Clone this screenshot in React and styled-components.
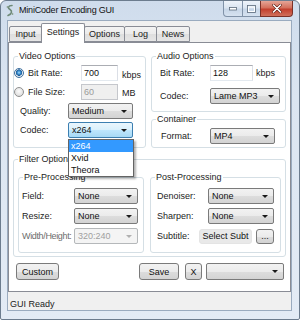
import React from 'react';
import styled, { createGlobalStyle } from 'styled-components';

const GlobalStyle = createGlobalStyle`
* { box-sizing: border-box; }
body {
  margin: 0;
  background: #fff;
  font-family: "Liberation Sans", Arial, sans-serif;
  font-size: 9px;
  color: #1c1c1c;
}
`;

const Window = styled.div`
width: 300px;
height: 320px;
border: 1px solid #6c7c8e;
border-radius: 6px 6px 2px 2px;
background: linear-gradient(180deg, #cfdcec 0%, #dbe5f1 30%, #e3ebf5 100%);
padding: 0 7px 8px 6px;
display: flex;
flex-direction: column;
`;

const TitleBar = styled.div`
height: 20px;
display: flex;
align-items: flex-start;
`;

const AppIcon = styled.svg`
width: 10px;
height: 13px;
margin: 3px 4px 0 -2px;
flex: none;
`;

const Title = styled.span`
font-size: 9px;
letter-spacing: -0.2px;
line-height: 18px;
color: #111;
`;

const Captions = styled.div`
margin-left: auto;
margin-right: -1px;
display: flex;
`;

const CaptionBtn = styled.div`
width: ${p => p.$w}px;
height: 16px;
display: flex;
align-items: center;
justify-content: center;
border: 1px solid ${p => (p.$close ? '#7b3128' : '#8092a8')};
border-top: none;
margin-left: -1px;
border-radius: ${p => p.$radius};
background: ${p => p.$close
    ? 'linear-gradient(180deg, #e5a597 0%, #d4705c 45%, #c33f2d 55%, #d0705c 100%)'
    : 'linear-gradient(180deg, #eef3fa 0%, #dbe5f1 45%, #c7d6e8 55%, #d6e2f0 100%)'};
`;

const Client = styled.div`
flex: 1;
display: flex;
flex-direction: column;
background: #f0f0f0;
border: 1px solid #9aabbf;
`;

const TabStrip = styled.div`
height: 21px;
display: flex;
align-items: flex-end;
padding-left: 1px;
`;

const Tab = styled.div`
width: ${p => p.$w}px;
height: ${p => (p.$active ? 20 : 16)}px;
margin-right: -1px;
margin-bottom: ${p => (p.$active ? -1 : 0)}px;
display: flex;
align-items: center;
justify-content: center;
padding-bottom: ${p => (p.$active ? 3 : 0)}px;
border: 1px solid #898c95;
border-bottom: ${p => (p.$active ? 'none' : '1px solid #898c95')};
border-radius: 2px 2px 0 0;
background: ${p => (p.$active
    ? '#fff'
    : 'linear-gradient(180deg, #f3f3f3 0%, #ebebeb 50%, #dedede 51%, #e6e6e6 100%)')};
position: relative;
z-index: ${p => (p.$active ? 2 : 1)};
`;

const Panel = styled.div`
height: 250px;
border: 1px solid #898c95;
background: #fff;
padding: 8px 4px 0 4px;
display: flex;
flex-direction: column;
`;

const TopRow = styled.div`
display: grid;
grid-template-columns: 133px 135px;
column-gap: 5px;
height: 97px;
`;

const RightCol = styled.div`
display: flex;
flex-direction: column;
gap: 2px;
`;

const Group = styled.fieldset`
margin: 0;
padding: 0;
min-width: 0;
border: 1px solid #d5dfe5;
border-radius: 3px;
width: ${p => (p.$w ? `${p.$w}px` : 'auto')};
height: ${p => (p.$h ? `${p.$h}px` : 'auto')};
margin-top: ${p => p.$mt || 0}px;
flex: ${p => (p.$grow ? 1 : 'none')};
`;

const Legend = styled.legend`
margin-left: 4px;
padding: 0 1px;
font-size: 9px;
line-height: 11px;
color: #1c1c1c;
`;

const Body = styled.div`
display: flex;
flex-direction: ${p => (p.$row ? 'row' : 'column')};
gap: ${p => p.$gap || 0}px;
padding: ${p => p.$pad || '0'};
`;

const Row = styled.div`
height: 16px;
display: flex;
align-items: center;
padding-left: ${p => p.$pl || 0}px;
`;

const RadioCell = styled.span`
width: ${p => p.$w}px;
flex: none;
display: flex;
align-items: center;
gap: 4px;
`;

const Radio = styled.span`
width: 10px;
height: 10px;
flex: none;
border-radius: 50%;
border: 1px solid ${p => (p.$on ? '#3d6f9e' : '#8e8f8f')};
background: ${p => (p.$on
    ? 'radial-gradient(circle at 50% 45%, #a9dcfb 0, #3a8fd0 1.6px, #1d5b96 3px, #e9eef3 3.4px, #d5dbe1 100%)'
    : 'radial-gradient(circle at 50% 40%, #fbfbfb 0, #e9e9e9 3px, #d4d4d4 100%)')};
`;

const FieldLabel = styled.span`
width: ${p => p.$w}px;
flex: none;
white-space: nowrap;
letter-spacing: ${p => (p.$tight ? '-0.35px' : 'normal')};
color: ${p => (p.$dim ? '#6d6d6d' : '#1c1c1c')};
`;

const TextBox = styled.div`
width: ${p => p.$w}px;
height: 16px;
flex: none;
border: 1px solid;
border-color: ${p => (p.$disabled ? '#c5c7cc' : '#abadb3 #dbdfe6 #e3e9ef #e2e3ea')};
background: ${p => (p.$disabled ? '#efefef' : '#fff')};
color: ${p => (p.$disabled ? '#9a9a9a' : '#111')};
padding-left: 2px;
line-height: 14px;
`;

const Unit = styled.span`
margin-left: ${p => p.$ml || 4}px;
padding-top: ${p => p.$dy || 0}px;
`;

const comboBg = {
  normal: 'linear-gradient(180deg, #f2f2f2 0%, #ebebeb 50%, #dddddd 51%, #d3d3d3 100%)',
  open: 'linear-gradient(180deg, #eaf6fd 0%, #d9f0fc 50%, #bee6fd 51%, #a7d9f5 100%)',
  disabled: '#f4f4f4',
};

const comboBorder = {
  normal: '#7a7a7a',
  open: '#3c7fb1',
  disabled: '#b5b8ba',
};

const Combo = styled.div`
position: relative;
width: ${p => p.$w}px;
height: ${p => p.$h || 16}px;
flex: none;
margin-left: ${p => p.$ml || 0}px;
display: flex;
align-items: center;
padding-left: 3px;
border: 1px solid ${p => comboBorder[p.$state || 'normal']};
border-radius: 2px;
background: ${p => comboBg[p.$state || 'normal']};
color: ${p => (p.$state === 'disabled' ? '#a0a0a0' : '#111')};
`;

const Arrow = styled.span`
margin-left: auto;
margin-right: 5px;
width: 0;
height: 0;
border-left: 3px solid transparent;
border-right: 3px solid transparent;
border-top: 3px solid ${p => (p.$dim ? '#b0b0b0' : '#1a1a1a')};
`;

const DropList = styled.ul`
position: absolute;
top: calc(100% + 2px);
left: -1px;
width: 66px;
margin: 0;
padding: 0;
list-style: none;
background: #fff;
border: 1px solid #646464;
box-shadow: 2px 2px 2px rgba(0, 0, 0, 0.3);
z-index: 5;
`;

const DropItem = styled.li`
height: 12px;
line-height: 12px;
padding-left: 2px;
background: ${p => (p.$sel ? '#3399ff' : 'transparent')};
color: ${p => (p.$sel ? '#fff' : '#111')};
`;

const Button = styled.div`
width: ${p => p.$w}px;
height: ${p => p.$h || 17}px;
flex: none;
margin-left: ${p => p.$ml || 0}px;
display: flex;
align-items: center;
justify-content: center;
border: 1px solid ${p => (p.$flat ? '#e4e4e4' : '#7a7a7a')};
border-radius: 3px;
background: ${p => (p.$flat
    ? '#e9e9e9'
    : 'linear-gradient(180deg, #f2f2f2 0%, #ebebeb 50%, #dddddd 51%, #d3d3d3 100%)')};
color: #111;
`;

const ButtonRow = styled.div`
margin-top: 6px;
height: 17px;
display: flex;
align-items: center;
padding: 0 2px 0 3px;
`;

const Spacer = styled.div`
flex: 1;
`;

const StatusBar = styled.div`
flex: 1;
padding: 7px 0 0 2px;
line-height: 11px;
`;

const tabs = [
  { name: 'Input', w: 33 },
  { name: 'Settings', w: 44, active: true },
  { name: 'Options', w: 41 },
  { name: 'Log', w: 33 },
  { name: 'News', w: 34 },
];

function ComboBox({ w, value, state, children }) {
  return (
    <Combo $w={w} $state={state}>
      {value}
      <Arrow $dim={state === 'disabled'} />
      {children}
    </Combo>
  );
}

export default function App() {
  return (
    <>
      <GlobalStyle />
      <Window>
        <TitleBar>
          <AppIcon viewBox="0 0 10 13">
            <path d="M7 1.5 C3 1.5 2.5 4 5 5.5 C7.5 7 7 10 3 11.5" fill="none" stroke="#6f8a78" strokeWidth="1.6" strokeLinecap="round" />
            <circle cx="2.5" cy="3" r="0.9" fill="#8aa08f" />
            <circle cx="7.5" cy="10" r="0.9" fill="#8aa08f" />
          </AppIcon>
          <Title>MiniCoder Encoding GUI</Title>
          <Captions>
            <CaptionBtn $w={20} $radius="0 0 0 4px">
              <svg width="8" height="4" viewBox="0 0 8 4">
                <rect x="0.5" y="0.5" width="7" height="2.5" fill="#fff" stroke="#5d6b7c" strokeWidth="0.8" />
              </svg>
            </CaptionBtn>
            <CaptionBtn $w={19} $radius="0">
              <svg width="9" height="8" viewBox="0 0 9 8">
                <rect x="0.5" y="0.5" width="8" height="7" fill="none" stroke="#5d6b7c" strokeWidth="0.8" />
                <rect x="1.5" y="2" width="6" height="4.5" fill="none" stroke="#fff" strokeWidth="1" />
              </svg>
            </CaptionBtn>
            <CaptionBtn $w={33} $radius="0 0 4px 0" $close>
              <svg width="10" height="9" viewBox="0 0 10 9">
                <path d="M1.5 1 L8.5 8 M8.5 1 L1.5 8" stroke="#5a1a12" strokeWidth="2.6" strokeLinecap="round" />
                <path d="M1.5 1 L8.5 8 M8.5 1 L1.5 8" stroke="#fff" strokeWidth="1.6" strokeLinecap="round" />
              </svg>
            </CaptionBtn>
          </Captions>
        </TitleBar>

        <Client>
          <TabStrip>
            {tabs.map(t => (
              <Tab key={t.name} $w={t.w} $active={t.active}>{t.name}</Tab>
            ))}
          </TabStrip>

          <Panel>
            <TopRow>
              <Group $h={97}>
                <Legend>Video Options</Legend>
                <Body $gap={3} $pad="3px 0 0 0">
                  <Row>
                    <RadioCell $w={67}><Radio $on />Bit Rate:</RadioCell>
                    <TextBox $w={37}>700</TextBox>
                    <Unit $dy={3}>kbps</Unit>
                  </Row>
                  <Row>
                    <RadioCell $w={67}><Radio />File Size:</RadioCell>
                    <TextBox $w={37} $disabled>60</TextBox>
                    <Unit $dy={2}>MB</Unit>
                  </Row>
                  <Row $pl={6}>
                    <FieldLabel $w={48}>Quality:</FieldLabel>
                    <ComboBox w={65} value="Medium" />
                  </Row>
                  <Row $pl={6}>
                    <FieldLabel $w={48}>Codec:</FieldLabel>
                    <ComboBox w={65} value="x264" state="open">
                      <DropList>
                        <DropItem $sel>x264</DropItem>
                        <DropItem>Xvid</DropItem>
                        <DropItem>Theora</DropItem>
                      </DropList>
                    </ComboBox>
                  </Row>
                </Body>
              </Group>

              <RightCol>
                <Group $h={61}>
                  <Legend>Audio Options</Legend>
                  <Body $gap={7} $pad="3px 0 0 0">
                    <Row $pl={8}>
                      <FieldLabel $w={50}>Bit Rate:</FieldLabel>
                      <TextBox $w={43}>128</TextBox>
                      <Unit $ml={3}>kbps</Unit>
                    </Row>
                    <Row $pl={8}>
                      <FieldLabel $w={50}>Codec:</FieldLabel>
                      <ComboBox w={70} value="Lame MP3" />
                    </Row>
                  </Body>
                </Group>
                <Group $grow>
                  <Legend>Container</Legend>
                  <Body $pad="3px 0 0 0">
                    <Row $pl={9}>
                      <FieldLabel $w={49}>Format:</FieldLabel>
                      <ComboBox w={65} value="MP4" />
                    </Row>
                  </Body>
                </Group>
              </RightCol>
            </TopRow>

            <Group $h={103} $mt={6}>
              <Legend>Filter Options</Legend>
              <Body $row $gap={6} $pad="7px 4px 3px 4px">
                <Group $h={81} $w={126}>
                  <Legend>Pre-Processing</Legend>
                  <Body $gap={4} $pad="5px 0 0 0">
                    <Row $pl={3}>
                      <FieldLabel $w={52}>Field:</FieldLabel>
                      <ComboBox w={64} value="None" />
                    </Row>
                    <Row $pl={3}>
                      <FieldLabel $w={52}>Resize:</FieldLabel>
                      <ComboBox w={64} value="None" />
                    </Row>
                    <Row $pl={3}>
                      <FieldLabel $w={52} $dim $tight>Width/Height:</FieldLabel>
                      <ComboBox w={64} value="320:240" state="disabled" />
                    </Row>
                  </Body>
                </Group>
                <Group $h={81} $grow>
                  <Legend>Post-Processing</Legend>
                  <Body $gap={4} $pad="5px 0 0 0">
                    <Row $pl={6}>
                      <FieldLabel $w={51}>Denoiser:</FieldLabel>
                      <ComboBox w={66} value="None" />
                    </Row>
                    <Row $pl={6}>
                      <FieldLabel $w={51}>Sharpen:</FieldLabel>
                      <ComboBox w={66} value="None" />
                    </Row>
                    <Row $pl={6}>
                      <FieldLabel $w={42}>Subtitle:</FieldLabel>
                      <Button $w={53} $h={15} $flat>Select Subt</Button>
                      <Button $w={18} $h={15} $ml={4}>...</Button>
                    </Row>
                  </Body>
                </Group>
              </Body>
            </Group>

            <ButtonRow>
              <Button $w={43}>Custom</Button>
              <Spacer />
              <Button $w={40}>Save</Button>
              <Button $w={17} $ml={6}>X</Button>
              <Combo $w={78} $h={17} $ml={4}>
                <Arrow />
              </Combo>
            </ButtonRow>
          </Panel>

          <StatusBar>GUI Ready</StatusBar>
        </Client>
      </Window>
    </>
  );
}
